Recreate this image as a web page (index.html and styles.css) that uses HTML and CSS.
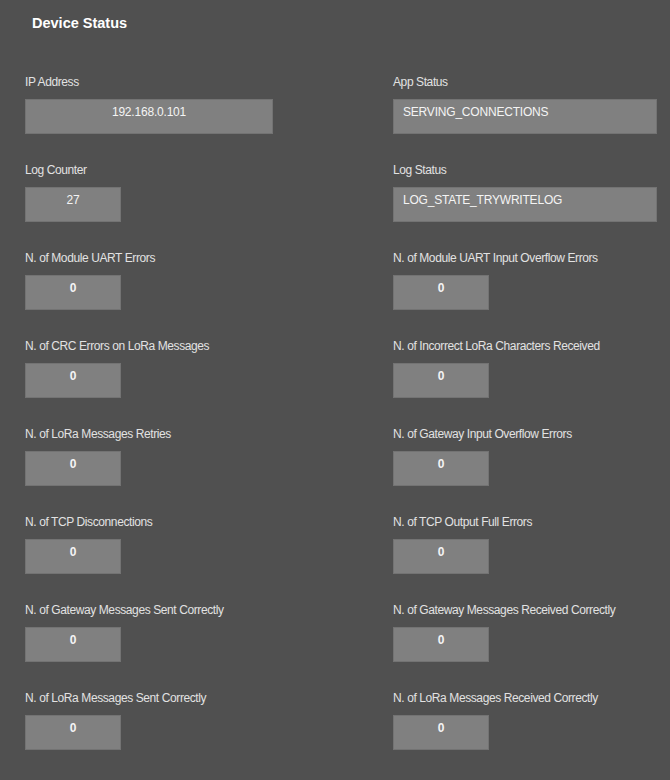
FILE: index.html
```html
<!DOCTYPE html>
<html>
<head>
<meta charset="utf-8">
<title>Device Status</title>
<link rel="stylesheet" href="styles.css">
</head>
<body>
<div class="page">
  <h1 class="title">Device Status</h1>
  <div class="grid">
    <div class="field">
      <div class="label">IP Address</div>
      <div class="box box-ip center">192.168.0.101</div>
    </div>
    <div class="field">
      <div class="label">App Status</div>
      <div class="box box-wide">SERVING_CONNECTIONS</div>
    </div>
    <div class="field">
      <div class="label">Log Counter</div>
      <div class="box box-small center">27</div>
    </div>
    <div class="field">
      <div class="label">Log Status</div>
      <div class="box box-wide">LOG_STATE_TRYWRITELOG</div>
    </div>
    <div class="field">
      <div class="label">N. of Module UART Errors</div>
      <div class="box box-small center num">0</div>
    </div>
    <div class="field">
      <div class="label">N. of Module UART Input Overflow Errors</div>
      <div class="box box-small center num">0</div>
    </div>
    <div class="field">
      <div class="label">N. of CRC Errors on LoRa Messages</div>
      <div class="box box-small center num">0</div>
    </div>
    <div class="field">
      <div class="label">N. of Incorrect LoRa Characters Received</div>
      <div class="box box-small center num">0</div>
    </div>
    <div class="field">
      <div class="label">N. of LoRa Messages Retries</div>
      <div class="box box-small center num">0</div>
    </div>
    <div class="field">
      <div class="label">N. of Gateway Input Overflow Errors</div>
      <div class="box box-small center num">0</div>
    </div>
    <div class="field">
      <div class="label">N. of TCP Disconnections</div>
      <div class="box box-small center num">0</div>
    </div>
    <div class="field">
      <div class="label">N. of TCP Output Full Errors</div>
      <div class="box box-small center num">0</div>
    </div>
    <div class="field">
      <div class="label">N. of Gateway Messages Sent Correctly</div>
      <div class="box box-small center num">0</div>
    </div>
    <div class="field">
      <div class="label">N. of Gateway Messages Received Correctly</div>
      <div class="box box-small center num">0</div>
    </div>
    <div class="field">
      <div class="label">N. of LoRa Messages Sent Correctly</div>
      <div class="box box-small center num">0</div>
    </div>
    <div class="field">
      <div class="label">N. of LoRa Messages Received Correctly</div>
      <div class="box box-small center num">0</div>
    </div>
  </div>
</div>
</body>
</html>
```
FILE: styles.css
```css
html, body {
  margin: 0;
  padding: 0;
  background: #505050;
}
body {
  font-family: "Liberation Sans", Arial, sans-serif;
  color: #e6e6e6;
  min-height: 780px;
}
.page {
  padding: 0 0 0 25px;
}
.title {
  margin: 0;
  padding: 14px 0 0 7px;
  height: 75px;
  box-sizing: border-box;
  font-size: 14.5px;
  line-height: 18px;
  font-weight: bold;
  color: #ffffff;
}
.grid {
  display: grid;
  grid-template-columns: 368px 1fr;
  row-gap: 29px;
}
.field {
  display: flex;
  flex-direction: column;
  align-items: flex-start;
}
.label {
  font-size: 12px;
  line-height: 14px;
  height: 14px;
  margin-bottom: 10px;
  color: #e2e2e2;
  letter-spacing: -0.4px;
  white-space: nowrap;
}
.box {
  box-sizing: border-box;
  height: 35px;
  background: #808080;
  border: 1px solid #737373;
  font-size: 12px;
  line-height: 14px;
  padding: 5px 9px 0;
  color: #f4f4f4;
  letter-spacing: -0.2px;
}
.center {
  text-align: center;
}
.num {
  font-weight: bold;
}
.box-ip {
  width: 248px;
}
.box-wide {
  width: 264px;
}
.box-small {
  width: 96px;
}
```
